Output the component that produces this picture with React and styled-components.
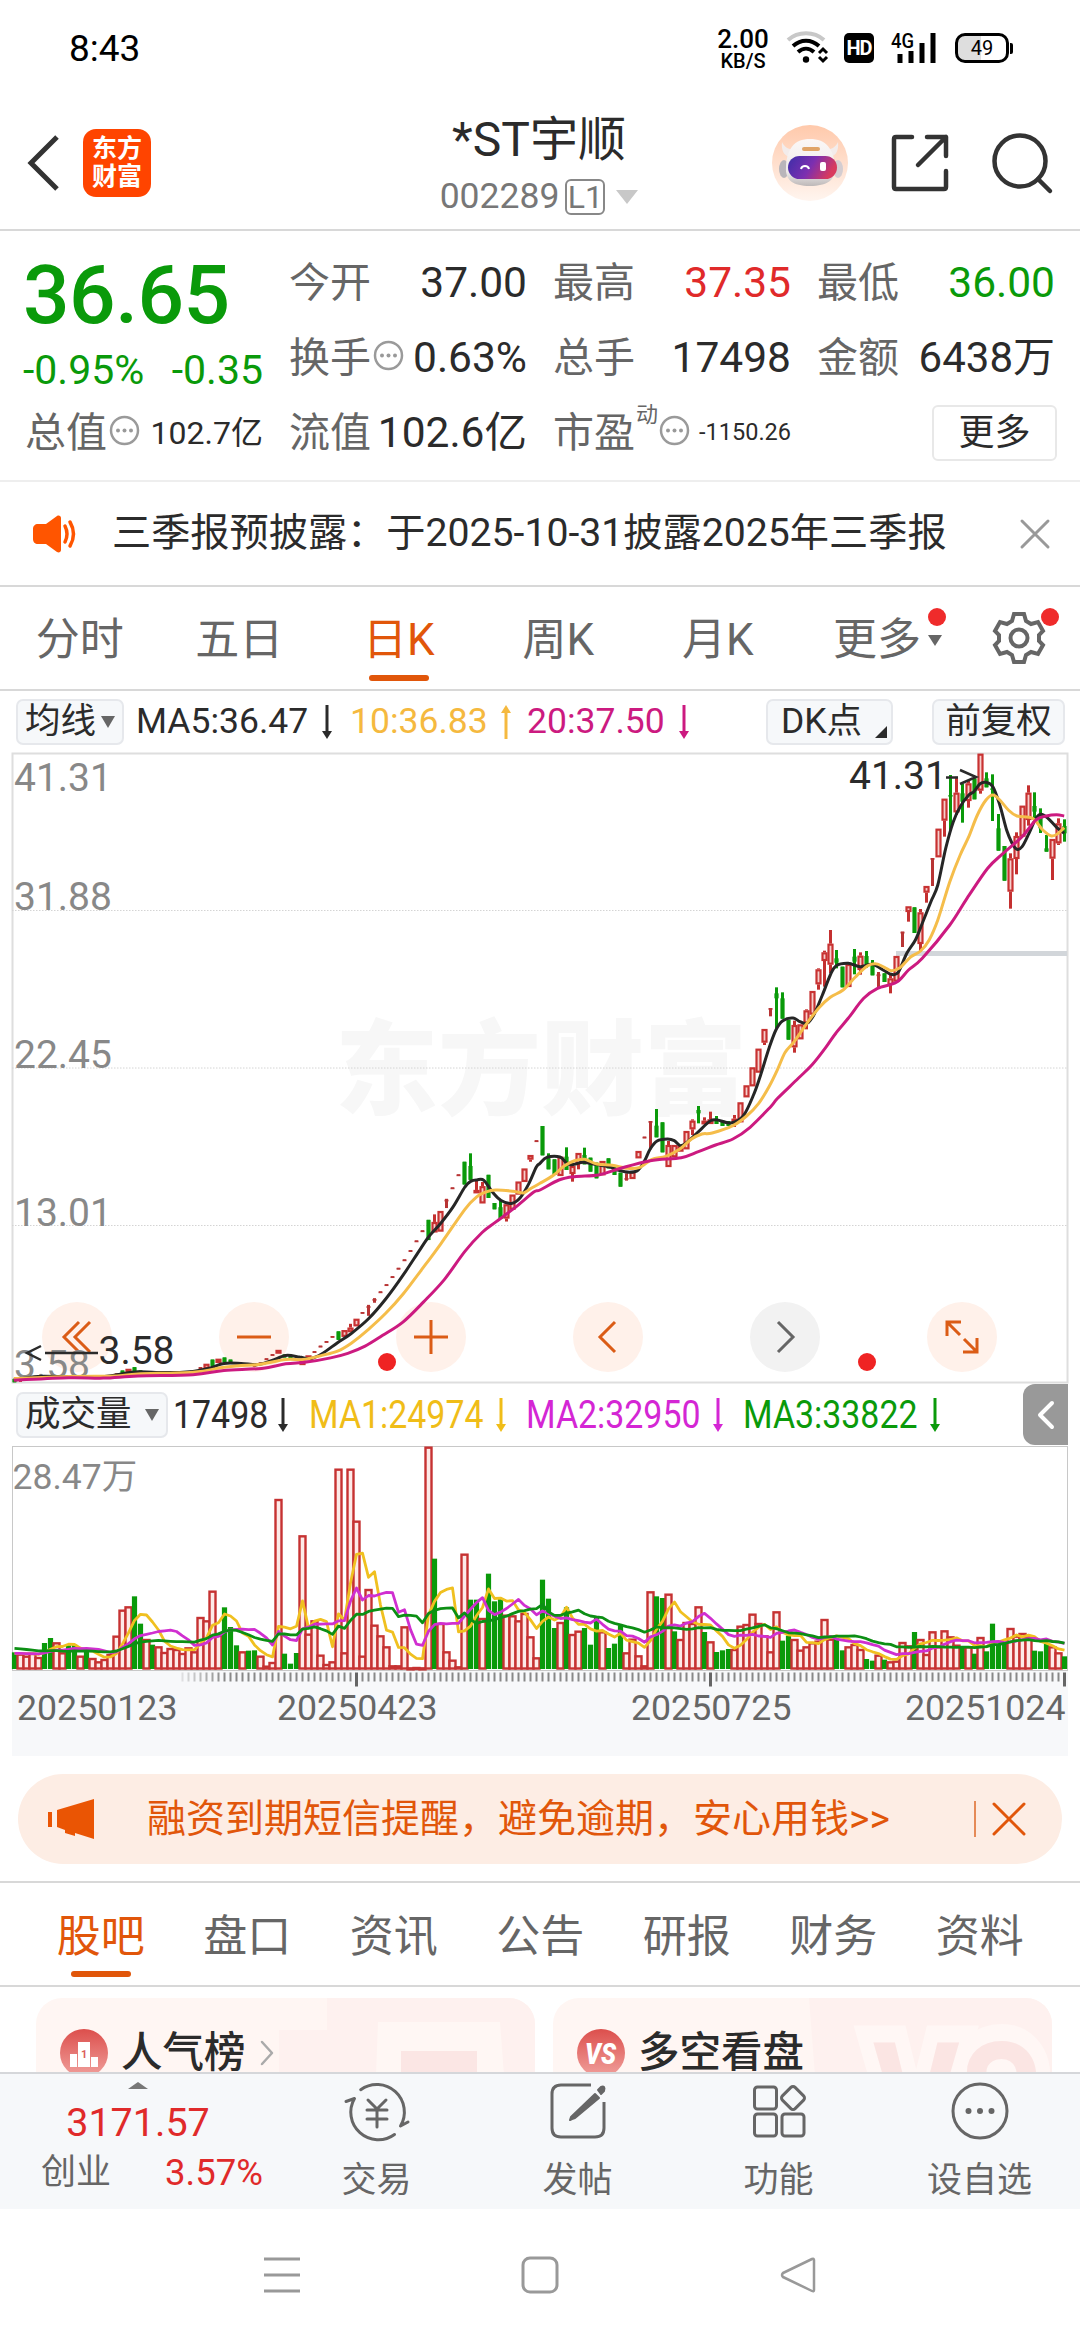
import React from "react";
import styled, { createGlobalStyle } from "styled-components";

const ORANGE = "#e1560a";
const RED = "#e02a2a";
const GREEN = "#0a9a0a";
const DARK = "#2b2b2b";
const GREY = "#666";

const GlobalStyle = createGlobalStyle`
  * {
    box-sizing: border-box;
  }
  body {
    margin: 0;
    background: #fff;
    font-family: Roboto, "Noto Sans CJK SC", sans-serif;
    color: ${DARK};
  }
  svg {
    display: block;
    flex: none;
    overflow: visible;
  }
`;

const Screen = styled.div`
  width: 1080px;
  height: 2340px;
  overflow: hidden;
  display: flex;
  flex-direction: column;
  line-height: 1;
  white-space: nowrap;
`;

/* ---------- status bar ---------- */

const StatusBar = styled.div`
  height: 96px;
  flex: none;
  padding: 0 67px 0 69px;
  display: flex;
  align-items: center;
  justify-content: space-between;
  color: #000;
  font-size: 37px;
`;

const StatusIcons = styled.div`
  display: flex;
  align-items: center;
`;

const NetSpeed = styled.div`
  width: 52px;
  margin-right: 18px;
  display: flex;
  flex-direction: column;
  align-items: center;
  font-size: 26px;
  font-weight: 500;
  small {
    font-size: 20px;
    line-height: 18px;
  }
`;

const HdBadge = styled.div`
  width: 30px;
  height: 30px;
  margin: 0 17px;
  border-radius: 5px;
  background: #000;
  color: #fff;
  font-size: 20px;
  font-weight: 700;
  display: flex;
  align-items: center;
  justify-content: center;
  letter-spacing: -1px;
`;

const Battery = styled.div`
  width: 54px;
  height: 30px;
  margin-left: 18px;
  border: 3px solid #000;
  border-radius: 10px;
  background: linear-gradient(90deg, #dedede 48%, #fff 48%);
  font-size: 20px;
  display: flex;
  align-items: center;
  justify-content: center;
`;

const BatteryTip = styled.div`
  width: 3px;
  height: 11px;
  margin-left: 1px;
  border-radius: 0 2px 2px 0;
  background: #000;
`;

/* ---------- header ---------- */

const Header = styled.header`
  height: 135px;
  flex: none;
  padding: 0 28px 0 26px;
  border-bottom: 2px solid #d8d8d8;
  display: grid;
  grid-template-columns: 1fr 240px 1fr;
  align-items: center;
`;

const HeaderSide = styled.div`
  display: flex;
  align-items: center;
  gap: ${(p) => p.$gap}px;
  justify-content: ${(p) => (p.$end ? "flex-end" : "flex-start")};
`;

const Logo = styled.div`
  width: 68px;
  height: 68px;
  border-radius: 13px;
  background: #ff4400;
  color: #fff;
  font-size: 25px;
  line-height: 28px;
  font-weight: 700;
  display: flex;
  flex-direction: column;
  align-items: center;
  justify-content: center;
`;

const TitleBlock = styled.div`
  padding-top: 13px;
  display: flex;
  flex-direction: column;
  align-items: center;
`;

const Title = styled.div`
  font-size: 48px;
  line-height: 56px;
`;

const Code = styled.div`
  display: flex;
  align-items: center;
  height: 58px;
  font-size: 35.5px;
  color: #777;
`;

const Level = styled.span`
  width: 40px;
  height: 36px;
  margin: 0 11px 0 6px;
  border: 2px solid #888;
  border-radius: 6px;
  font-size: 32px;
  display: flex;
  align-items: center;
  justify-content: center;
`;

const Caret = styled.span`
  width: 0;
  height: 0;
  border: ${(p) => p.$w / 2}px solid transparent;
  border-bottom-width: 0;
  border-top: ${(p) => p.$h}px solid ${(p) => p.$color};
`;

/* ---------- quote ---------- */

const Quote = styled.section`
  height: 251px;
  flex: none;
  padding: 14px 0 0 25px;
  border-bottom: 2px solid #eee;
  display: grid;
  grid-template-columns: repeat(4, 238px);
  grid-template-rows: repeat(3, 75px);
  column-gap: 26px;
`;

const Price = styled.div`
  grid-row: span 2;
  color: ${GREEN};
  display: flex;
  flex-direction: column;
  strong {
    margin-left: -2px;
    font-size: 82px;
    line-height: 100px;
    font-weight: 500;
    letter-spacing: -0.5px;
  }
  div {
    height: 50px;
    margin-left: -2px;
    display: flex;
    align-items: center;
    justify-content: space-between;
    font-size: 41px;
  }
`;

const Cell = styled.div`
  padding-top: 1px;
  display: flex;
  align-items: center;
  justify-content: space-between;
  font-size: 42px;
`;

const CellLabel = styled.span`
  display: flex;
  align-items: center;
  color: ${GREY};
  font-size: 41px;
  sup {
    align-self: flex-start;
    height: 22px;
    margin: -9px -1px 0 1px;
    line-height: 22px;
    vertical-align: baseline;
    font-size: 22px;
  }
  svg {
    margin: -5px 0 0 2px;
  }
`;

const CellValue = styled.span`
  font-size: ${(p) => p.$size || 42.5}px;
  color: ${(p) => p.$color || DARK};
`;

const MoreButton = styled.div`
  width: 125px;
  height: 56px;
  margin-right: -2px;
  align-self: center;
  justify-self: end;
  border: 2px solid #e8e8e8;
  border-radius: 6px;
  font-size: 36px;
  display: flex;
  align-items: center;
  justify-content: center;
`;

/* ---------- notice ---------- */

const Notice = styled.div`
  height: 105px;
  flex: none;
  padding: 0 30px 0 33px;
  border-bottom: 2px solid #d8d8d8;
  display: flex;
  align-items: center;
  font-size: 39.2px;
  span {
    flex: 1;
    margin-left: 33px;
  }
`;

/* ---------- tabs ---------- */

const TabBar = styled.div`
  height: 104px;
  flex: none;
  padding-left: ${(p) => p.$left}px;
  border-bottom: 2px solid #d8d8d8;
  display: flex;
  font-size: 44px;
  color: ${GREY};
`;

const Tab = styled.div`
  width: ${(p) => p.$width}px;
  padding-top: ${(p) => p.$drop || 0}px;
  position: relative;
  display: flex;
  align-items: center;
  justify-content: center;
  color: ${(p) => (p.$active ? ORANGE : GREY)};
  &::after {
    content: "";
    display: ${(p) => (p.$active ? "block" : "none")};
    position: absolute;
    bottom: 8px;
    width: 60px;
    height: 6px;
    border-radius: 3px;
    background: ${ORANGE};
  }
`;

const Badge = styled.i`
  position: absolute;
  top: 21px;
  right: ${(p) => p.$right}px;
  width: 18px;
  height: 18px;
  border-radius: 50%;
  background: #ef2b2b;
`;

/* ---------- chart legends ---------- */

const Legend = styled.div`
  height: ${(p) => p.$height}px;
  flex: none;
  padding-left: 16px;
  display: flex;
  align-items: center;
  font-size: 35.5px;
`;

const Chip = styled.div`
  width: ${(p) => p.$width}px;
  height: 46px;
  margin-left: ${(p) => p.$left || 0}px;
  padding: 0 7px;
  border: 2px solid #e6e8ec;
  border-radius: 7px;
  background: #f6f8fa;
  display: flex;
  align-items: center;
  justify-content: ${(p) => (p.$spread ? "space-between" : "center")};
`;

const DkChip = styled(Chip)`
  padding: 0 4px 0 13px;
`;

const Corner = styled.i`
  align-self: flex-end;
  margin-bottom: 5px;
  border-left: 12px solid transparent;
  border-bottom: 12px solid ${DARK};
`;

const Stat = styled.span`
  width: ${(p) => p.$width}px;
  margin-left: ${(p) => p.$left}px;
  color: ${(p) => p.$color};
  display: flex;
  align-items: center;
  justify-content: space-between;
`;

const Narrow = styled.span`
  width: 0;
  font-size: 38px;
  transform: scaleX(0.892);
  transform-origin: left;
`;

const SideHandle = styled.div`
  width: 45px;
  height: 61px;
  margin: 0 12px 0 auto;
  border-radius: 12px 0 0 12px;
  background: #999;
  display: flex;
  align-items: center;
  justify-content: center;
`;

/* ---------- charts ---------- */

const ChartBox = styled.div`
  position: relative;
  height: ${(p) => p.$height}px;
  flex: none;
  & > svg {
    position: relative;
  }
`;

// sits under the curves and price labels
const Tools = styled.div`
  position: absolute;
  left: 41.5px;
  bottom: 11px;
  display: flex;
  gap: 107px;
`;

const Tool = styled.div`
  width: 70px;
  height: 70px;
  border-radius: 50%;
  background: ${(p) => (p.$muted ? "#f2f2f2" : "#fff1ea")};
  color: ${(p) => (p.$muted ? GREY : "#db5c16")};
  display: flex;
  align-items: center;
  justify-content: center;
`;

/* ---------- banner ---------- */

const BannerWrap = styled.div`
  height: 127px;
  flex: none;
  padding: 18px 18px 0;
  border-bottom: 2px solid #d8d8d8;
`;

const Banner = styled.div`
  height: 90px;
  padding: 0 36px 0 30px;
  border-radius: 45px;
  background: #fdede4;
  color: ${ORANGE};
  font-size: 39px;
  display: flex;
  align-items: center;
  span {
    flex: 1;
    margin-left: 53px;
  }
  i {
    width: 2px;
    height: 36px;
    margin-right: 16px;
    background: #e58a57;
  }
`;

/* ---------- cards ---------- */

const Cards = styled.div`
  height: 85px;
  flex: none;
  padding: 11px 28px 0 36px;
  overflow: hidden;
  display: flex;
  gap: 18px;
`;

const Card = styled.div`
  position: relative;
  flex: 1;
  height: 130px;
  padding: 31px 0 0 24px;
  border-radius: 26px;
  overflow: hidden;
  background: #fff6f3;
  display: flex;
  align-items: flex-start;
  font-size: 41.5px;
  line-height: 48px;
  font-weight: 500;
  & > span {
    margin: 0 12px 0 13px;
    position: relative;
  }
  & > svg {
    position: relative;
  }
`;

const CardArt = styled.div`
  position: absolute;
  inset: 0;
`;

/* ---------- bottom ---------- */

const BottomBar = styled.div`
  height: 137px;
  flex: none;
  border-top: 2px solid #d5d7da;
  background: #f6f8fa;
  display: grid;
  grid-template-columns: 276px repeat(4, 201px);
`;

const IndexBox = styled.div`
  padding: 8px 13px 0 41px;
  display: flex;
  flex-direction: column;
  color: ${RED};
  strong {
    margin: 15px 28px 0 0;
    text-align: center;
    font-weight: 400;
    font-size: 39.5px;
    line-height: 38px;
  }
  div {
    display: flex;
    justify-content: space-between;
    margin-top: 11px;
    line-height: 40px;
    font-size: 36.5px;
  }
  em {
    font-style: normal;
    font-size: 35px;
    color: ${GREY};
  }
`;

const CaretUp = styled.i`
  align-self: center;
  margin-right: 28px;
  border: 10px solid transparent;
  border-top-width: 0;
  border-bottom: 7px solid #777;
`;

const Action = styled.div`
  padding-top: 7px;
  display: flex;
  flex-direction: column;
  align-items: center;
  gap: 22px;
  font-size: 35px;
  color: ${GREY};
`;

const NavBar = styled.div`
  flex: 1;
  padding: 0 263px;
  display: flex;
  align-items: center;
  justify-content: space-between;
`;

/* ---------- chart data ---------- */

const STEP = 6;
const xAt = (i) => 14.5 + i * STEP;

// three panes of the price chart, each with its own grid
const PANES = {
  a: { x0: 0, y0: -13, sx: 2.9037, sy: 2.3758 },
  b: { x0: 540, y0: 307, sx: 2.9037, sy: 3 },
  c: { x0: 540, y0: -13, sx: 2.9037, sy: 3 },
};

// index, direction, body top, body bottom, high, low
const CANDLES = {
  a: [
    [0, "g", 1518, 1526], [1, "r", 1518, 1525], [4, "r", 1513, 1519], [5, "g", 1510, 1518],
    [9, "g", 1509, 1516], [10, "g", 1511, 1517], [13, "r", 1513, 1518],
    [17, "r", 1505, 1510], [18, "g", 1498, 1508], [19, "r", 1494, 1504], [20, "g", 1490, 1500],
    [21, "g", 1498, 1503], [31, "r", 1490, 1497], [32, "r", 1482, 1494], [33, "g", 1472, 1487],
    [34, "r", 1470, 1480], [35, "g", 1467, 1478], [36, "g", 1472, 1482], [40, "r", 1484, 1489],
    [41, "r", 1479, 1482], [42, "r", 1469, 1472], [43, "r", 1459, 1462], [44, "r", 1449, 1458],
    [45, "g", 1460, 1467], [46, "g", 1464, 1469], [48, "r", 1474, 1485], [49, "r", 1462, 1472],
    [50, "r", 1452, 1455], [51, "r", 1439, 1442], [52, "r", 1428, 1431], [53, "r", 1416, 1419],
    [54, "g", 1405, 1425], [55, "r", 1402, 1418], [56, "r", 1396, 1407, 1387], [57, "r", 1375, 1393],
    [58, "r", 1359, 1362], [59, "r", 1345, 1351, 1342, 1368], [60, "r", 1328, 1331, 1326, 1337], [61, "r", 1310, 1313],
    [62, "r", 1293, 1296], [63, "r", 1274, 1277], [64, "r", 1254, 1257], [65, "r", 1234, 1237],
    [66, "r", 1212, 1215], [67, "r", 1189, 1192], [68, "r", 1165, 1168], [69, "g", 1140, 1188],
    [70, "r", 1145, 1170, 1127], [71, "r", 1119, 1168], [72, "r", 1092, 1096, 1090, 1112], [73, "r", 1063, 1066],
    [74, "r", 1032, 1035], [75, "g", 1002, 1056], [76, "g", 1012, 1045, 982], [77, "r", 1069, 1077, 1045],
    [78, "r", 1060, 1101, 1050], [79, "g", 1033, 1088], [80, "g", 1100, 1115], [81, "g", 1110, 1138, 1093],
    [82, "r", 1103, 1137, 1103, 1144], [83, "r", 1080, 1116], [84, "r", 1049, 1080], [85, "r", 1018, 1050],
    [86, "r", 986, 997, 986, 1002], [87, "r", 951, 954],
  ],
  b: [
    [88, "g", 198, 286], [89, "g", 295, 328, 280], [90, "g", 298, 345], [91, "r", 290, 348],
    [92, "g", 290, 330, 262], [93, "r", 318, 342, 318, 365], [94, "r", 279, 312, 279, 328], [95, "g", 285, 313, 263],
    [96, "g", 293, 335], [97, "g", 308, 355], [98, "r", 303, 346], [99, "g", 295, 325],
    [100, "g", 318, 345], [101, "g", 338, 380], [102, "r", 354, 362, 340], [103, "r", 335, 357],
    [104, "r", 273, 295], [105, "r", 230, 233], [106, "r", 183, 185, 183, 268], [107, "g", 197, 232, 147],
    [108, "g", 187, 277], [109, "r", 255, 321, 243], [110, "r", 255, 292], [111, "r", 258, 275],
    [112, "r", 213, 268], [113, "r", 182, 208, 178, 225], [114, "g", 150, 160, 138, 190], [115, "r", 182, 193, 172],
    [116, "r", 178, 192, 155], [117, "g", 178, 192, 168], [118, "g", 182, 198], [119, "g", 184, 198],
    [120, "r", 176, 188, 165, 201], [121, "r", 127, 187], [122, "r", 76, 112], [123, "r", 22, 79],
    [124, "r", -34, 38],
  ],
  c: [
    [125, "r", 867, 908, 867, 915], [126, "r", 804, 811, 804, 829], [127, "g", 760, 775, 742, 866], [128, "g", 775, 836, 757],
    [129, "g", 840, 899], [130, "r", 855, 922, 842, 938], [131, "r", 853, 898], [132, "r", 811, 850, 808, 868],
    [133, "r", 753, 824], [134, "r", 688, 733, 685, 749], [135, "r", 637, 663, 632, 740], [136, "r", 611, 674, 570, 700],
    [137, "g", 655, 668, 630, 685], [138, "g", 680, 742], [139, "r", 672, 741], [140, "g", 650, 665, 627, 703],
    [141, "r", 647, 690, 637, 704], [142, "g", 648, 672, 633, 683], [143, "g", 675, 706, 660], [144, "r", 703, 711, 696, 742],
    [145, "g", 700, 726], [146, "r", 715, 735, 703, 760], [147, "r", 648, 725], [148, "r", 575, 577, 575, 621],
    [149, "r", 499, 516, 499, 545], [150, "g", 502, 579], [151, "r", 517, 612, 507, 634], [152, "r", 438, 458, 438, 488],
    [153, "r", 354, 356, 354, 438], [154, "r", 266, 352], [155, "r", 176, 242, 176, 290], [156, "g", 165, 170, 105, 270],
    [157, "r", 158, 217, 110, 225], [158, "g", 160, 185, 132, 248], [159, "r", 130, 183, 120, 203], [160, "g", 115, 178],
    [161, "r", 41, 152, 41, 161], [162, "g", 115, 142, 97], [163, "g", 145, 150, 103, 243], [164, "g", 265, 332, 222],
    [165, "g", 318, 422], [166, "r", 355, 455, 340, 506], [167, "r", 288, 357, 277, 403], [168, "r", 197, 290],
    [169, "r", 158, 240, 136, 257], [170, "g", 198, 215, 157, 235], [171, "g", 225, 265, 205, 279], [172, "g", 325, 335, 285],
    [173, "r", 297, 356, 297, 420], [174, "r", 250, 310, 235, 315], [175, "g", 258, 280, 238, 305],
  ],
};

const AVERAGES = [
  {
    color: "#262626",
    a: [40, 1520, 110, 1512, 200, 1513, 280, 1514, 340, 1508, 400, 1501, 480, 1503, 560, 1500, 610, 1492, 650, 1481, 700, 1481, 750, 1484, 790, 1474, 830, 1462, 870, 1466, 900, 1470, 935, 1458, 980, 1432, 1020, 1410, 1070, 1375, 1120, 1328, 1170, 1272, 1220, 1210, 1245, 1180, 1280, 1148, 1315, 1110, 1350, 1062, 1368, 1048, 1385, 1045, 1405, 1046, 1430, 1074, 1455, 1094, 1485, 1101, 1510, 1088, 1535, 1055, 1557, 1015],
    b: [0, 310, 20, 292, 58, 291, 80, 312, 100, 313, 125, 307, 160, 313, 200, 320, 225, 330, 260, 337, 285, 330, 305, 300, 320, 267, 340, 243, 370, 237, 390, 242, 408, 257, 430, 244, 470, 205, 495, 182, 515, 180, 555, 189, 590, 168, 620, 105, 640, 47],
    c: [665, 925, 685, 870, 705, 842, 735, 834, 755, 845, 775, 850, 795, 825, 820, 765, 843, 705, 860, 677, 895, 670, 930, 680, 965, 673, 1000, 692, 1020, 703, 1040, 697, 1065, 640, 1090, 600, 1110, 550, 1135, 485, 1155, 435, 1178, 325, 1200, 245, 1220, 200, 1245, 165, 1260, 155, 1277, 132, 1295, 127, 1315, 140, 1335, 195, 1355, 270, 1370, 308, 1385, 328, 1400, 320, 1420, 280, 1440, 235, 1455, 223, 1475, 235, 1500, 262, 1522, 280],
  },
  {
    color: "#f5bd4a",
    a: [40, 1517, 200, 1512, 340, 1511, 400, 1506, 560, 1502, 650, 1490, 700, 1486, 750, 1484, 830, 1472, 880, 1472, 935, 1462, 980, 1452, 1020, 1433, 1070, 1400, 1120, 1362, 1170, 1317, 1220, 1263, 1280, 1197, 1350, 1115, 1385, 1085, 1410, 1074, 1440, 1069, 1490, 1072, 1520, 1076, 1540, 1066],
    b: [0, 370, 40, 345, 70, 318, 100, 302, 130, 298, 165, 312, 210, 316, 255, 325, 290, 322, 325, 298, 365, 289, 405, 268, 440, 237, 470, 222, 500, 219, 560, 197, 600, 168, 635, 130, 665, 80, 690, 28],
    c: [712, 937, 738, 905, 775, 850, 810, 803, 843, 772, 880, 750, 915, 712, 950, 678, 975, 671, 1000, 682, 1020, 692, 1045, 683, 1075, 652, 1105, 633, 1130, 600, 1155, 540, 1190, 425, 1220, 345, 1245, 290, 1270, 225, 1295, 180, 1315, 165, 1335, 180, 1360, 210, 1385, 228, 1430, 235, 1460, 270, 1485, 288, 1505, 280, 1522, 263],
  },
  {
    color: "#cc1a80",
    a: [40, 1521, 200, 1515, 300, 1516, 400, 1511, 560, 1508, 650, 1498, 760, 1493, 830, 1482, 890, 1478, 960, 1468, 1010, 1457, 1060, 1440, 1110, 1415, 1170, 1383, 1230, 1335, 1290, 1282, 1350, 1215, 1400, 1170, 1440, 1145, 1500, 1108, 1550, 1074],
    b: [0, 390, 55, 360, 100, 350, 170, 345, 230, 326, 320, 302, 410, 293, 460, 275, 510, 255, 560, 237, 610, 202, 670, 140, 690, 115, 750, 55, 790, 14],
    c: [830, 922, 860, 878, 895, 835, 940, 775, 980, 745, 1035, 727, 1070, 690, 1110, 655, 1190, 555, 1240, 475, 1300, 385, 1345, 340, 1400, 290, 1440, 240, 1470, 228, 1500, 224, 1522, 228],
  },
];

const toY = (pane, v) => v / pane.sy + pane.y0;

const toPoints = (line) =>
  ["a", "b", "c"].flatMap((key) => {
    const pane = PANES[key];
    const points = [];
    for (let i = 0; i < line[key].length; i += 2) {
      points.push([line[key][i] / pane.sx + pane.x0, toY(pane, line[key][i + 1])]);
    }
    return points;
  });

// Catmull-Rom through the points
const smooth = (pts) =>
  pts.reduce((d, p, i) => {
    if (i === 0) return `M${p[0].toFixed(1)} ${p[1].toFixed(1)}`;
    const p0 = pts[i - 2] || pts[i - 1];
    const p1 = pts[i - 1];
    const p3 = pts[i + 1] || p;
    const c = [
      p1[0] + (p[0] - p0[0]) / 6,
      p1[1] + (p[1] - p0[1]) / 6,
      p[0] - (p3[0] - p1[0]) / 6,
      p[1] - (p3[1] - p1[1]) / 6,
      p[0],
      p[1],
    ];
    return `${d}C${c.map((n) => n.toFixed(1)).join(" ")}`;
  }, "");

const FLOOR = 868;
const VOLUME = `g818 r822 r828 r820 r832 g790 g775 r788 r818 g797 g795 r828 g817 r835 r845 r838 r823 r768 r690 r680
g650 g732 r778 g795 r800 r817 r805 r808 r820 r803 r815 r712 r722 r633 r765 g683 g742 g797 r815 g813
g812 r828 r858 r847 r358 g822 g852 g820 r467 r762 r722 r825 r853 r845 r267 r818 r267 r423 r828 r628
r735 r767 r800 r857 r857 r740 r863 r862 r863 r201 g537 r730 r815 r840 r860 r522 g660 g660 r715 g582
g665 g655 r705 r707 r722 r700 r770 r833 g600 g657 g745 r727 g683 r763 r753 g745 g795 g715 r755 g805
g792 g737 r818 r777 r827 r857 r635 g650 g655 r642 g755 r778 r727 r730 r680 g757 r785 g817 g812 g808
r808 r738 r733 r702 r730 r767 r815 r695 g783 g768 r778 r810 r800 r788 r783 r718 r777 g778 g812 r800
r793 r808 g838 g843 r825 g840 r845 r843 r787 r797 g757 r778 r823 r755 r800 r752 r770 r795 g800 r800
g822 r772 g815 g732 g795 g790 r745 r768 r760 r770 g813 g815 g793 r800 r818 g830`
  .split(/\s+/)
  .map((s) => ({ up: s[0] === "r", h: (FLOOR - Number(s.slice(1))) / 3 }));

const HISTORY = [...Array(10).fill(27), ...Array(10).fill(15.5)];

const volumeAverage = (n) => {
  const all = [...HISTORY, ...VOLUME.map((v) => v.h)];
  return VOLUME.map((_, i) => {
    const end = i + HISTORY.length + 1;
    const sum = all.slice(end - n, end).reduce((a, b) => a + b, 0);
    return `${xAt(i)},${(223 - sum / n).toFixed(1)}`;
  }).join(" ");
};

/* ---------- icons ---------- */

const Stroke = ({ w, h, d, color = "currentColor", sw = 4, cap = "round", join = "round", children }) => (
  <svg width={w} height={h} viewBox={`0 0 ${w} ${h}`} fill="none" stroke={color} strokeWidth={sw} strokeLinecap={cap} strokeLinejoin={join}>
    {d && <path d={d} />}
    {children}
  </svg>
);

const Arrow = ({ up }) => (
  <svg width="12" height="34" viewBox="0 0 12 34">
    <g transform={up ? "rotate(180 6 17)" : undefined}>
      <path d="M6 0V28" stroke="currentColor" strokeWidth="3" />
      <path d="M1 26h10l-5 8z" fill="currentColor" />
    </g>
  </svg>
);

const Dots = () => (
  <svg width="31" height="31" viewBox="0 0 31 31">
    <circle cx="15.5" cy="15.5" r="13.5" fill="none" stroke="#9a9a9a" strokeWidth="2.500" />
    <g fill="#999">
      <circle cx="9" cy="15.5" r="2" />
      <circle cx="15.5" cy="15.5" r="2" />
      <circle cx="22" cy="15.5" r="2" />
    </g>
  </svg>
);

const Robot = () => (
  <svg width="76" height="76" viewBox="0 0 76 76">
    <defs>
      <linearGradient id="halo" x1="0" y1="0" x2="0" y2="1">
        <stop offset="0" stopColor="#ffc9ab" />
        <stop offset="1" stopColor="#fff5ef" />
      </linearGradient>
      <linearGradient id="visor" x1="0" y1="0" x2="1" y2="0.3">
        <stop offset="0" stopColor="#3d2ea8" />
        <stop offset="0.55" stopColor="#7c2fb0" />
        <stop offset="1" stopColor="#d83a5e" />
      </linearGradient>
      <linearGradient id="shell" x1="0" y1="0" x2="0" y2="1">
        <stop offset="0" stopColor="#fbf7f6" />
        <stop offset="0.7" stopColor="#efebeb" />
        <stop offset="1" stopColor="#bdb8b8" />
      </linearGradient>
    </defs>
    <circle cx="38" cy="38" r="38" fill="url(#halo)" />
    <path d="M10 17c-1 8 2 14 8 15l6-7c-7 0-12-3-14-8zM66 17c1 8-2 14-8 15l-6-7c7 0 12-3 14-8z" fill="#f3eceb" />
    <ellipse cx="12" cy="44" rx="5" ry="9" fill="#b9b5ba" />
    <ellipse cx="66" cy="44" rx="5" ry="9" fill="#d4cdd1" />
    <path d="M14 42C15 24 22 14 38 14s24 10 25 28c1 13-8 19-25 19S13 55 14 42z" fill="url(#shell)" />
    <rect x="30" y="22" width="18" height="4" rx="2" fill="#e0a468" />
    <rect x="16" y="31" width="49" height="23" rx="11.500" fill="url(#visor)" />
    <path d="M29 44c1-4 7-4 8 0" fill="none" stroke="#fff" strokeWidth="2" />
    <rect x="48" y="37" width="6" height="9" rx="2" fill="#fff" />
  </svg>
);

const Wifi = () => (
  <svg width="40" height="32" viewBox="0 0 40 32" fill="none" strokeWidth="4">
    <path d="M1 8C11-1 27-1 37 8" stroke="#c8c8c8" />
    <path d="M6 14C14 7 24 7 32 14M11 20C16 15.500 22 15.500 27 20" stroke="#000" />
    <circle cx="19" cy="27.500" r="3.200" fill="#000" />
    <path d="M32 21l4-4 4 4M32 25l4 4 4-4" stroke="#000" strokeWidth="3" />
  </svg>
);

const Signal = () => (
  <svg width="46" height="32" viewBox="0 0 46 32">
    <text x="0" y="16" fontSize="20" fontWeight="500" textLength="23" lengthAdjust="spacingAndGlyphs">4G</text>
    <path d="M9 22V31M20 19V31M31 11V31M42 1V31" stroke="#000" strokeWidth="5" />
  </svg>
);

const Gear = () => (
  <Stroke w={52} h={54} sw={4} join="miter" cap="butt">
    <path d="M21 3h10l2 7 5 3 7-2 5 9-4 4v6l4 4-5 9-7-2-5 3-2 7H21l-2-7-5-3-7 2-5-9 4-4v-6l-4-4 5-9 7 2 5-3z" />
    <circle cx="26" cy="27" r="8.500" />
  </Stroke>
);

const Speaker = () => (
  <svg width="46" height="38" viewBox="0 0 46 38">
    <path d="M5 9h8L24 1c2-1 4 0 4 2v32c0 2-2 3-4 2l-11-8H5c-3 0-5-2-5-5V14c0-3 2-5 5-5z" fill="#ff5500" />
    <path d="M32 11q4 8 0 16M37 7q7 12 0 24" fill="none" stroke="#ff5500" strokeWidth="3.500" strokeLinecap="round" />
  </svg>
);

const Horn = () => (
  <svg width="46" height="40" viewBox="0 0 46 40">
    <path d="M0 13h4v15H0zM9 11L46 0v40l-19-6v3l-10-3v-3l-8-3z" fill="#ea5504" />
  </svg>
);

const TradeIcon = () => (
  <Stroke w={66} h={60} sw={3}>
    <path d="M16.700 8.700A27.500 27.500 0 0 1 56.500 45l7.500-4M50.500 53.500A27.500 27.500 0 0 1 10.500 17.500L2 20.500" />
    <path d="M24 19l9 9 9-9M33 28v18M23 29h20M23 38h20" />
  </Stroke>
);

const PostIcon = () => (
  <Stroke w={60} h={60} sw={3} cap="butt">
    <path d="M43 4H13Q4 4 4 13v34q0 9 9 9h34q9 0 9-9V21" />
    <path d="M24 38l-2 1 1-3L47 13l4 4-24 20zM50 9l3-3q2-1 3 0t0 4l-3 3z" fill="currentColor" strokeWidth="2" />
  </Stroke>
);

const GridIcon = () => (
  <Stroke w={60} h={60} sw={3}>
    <rect x="5.500" y="6" width="22" height="22" rx="3" />
    <rect x="5.500" y="33" width="22" height="22" rx="3" />
    <rect x="33" y="33" width="22" height="22" rx="3" />
    <rect x="35" y="8" width="18" height="18" rx="3" transform="rotate(45 44 17)" />
  </Stroke>
);

const MoreIcon = () => (
  <Stroke w={60} h={60} sw={3}>
    <circle cx="30" cy="30" r="27" />
    <g fill="currentColor" stroke="none">
      <circle cx="18.500" cy="30" r="3" />
      <circle cx="30" cy="30" r="3" />
      <circle cx="41.500" cy="30" r="3" />
    </g>
  </Stroke>
);

const CardIcon = ({ id, children }) => (
  <svg width="48" height="48" viewBox="0 0 48 48">
    <defs>
      <linearGradient id={id} x1="0" y1="0" x2="0" y2="1">
        <stop offset="0" stopColor="#dc4f4c" />
        <stop offset="1" stopColor="#f0a09c" />
      </linearGradient>
    </defs>
    <circle cx="24" cy="24" r="24" fill={`url(#${id})`} />
    {children}
  </svg>
);

/* ---------- charts ---------- */

const Candle = ({ pane, data }) => {
  const [i, dir, top, bottom, high = top, low = bottom] = data;
  const x = xAt(i);
  const [t, b, h, l] = [top, bottom, high, low].map((v) => toY(pane, v));
  if (dir === "g") {
    return (
      <g fill={GREEN}>
        <rect x={x - 1.5} y={h} width="3" height={l - h} />
        <rect x={x - 2.1} y={t} width="4.200" height={b - t} />
      </g>
    );
  }
  if (b - t < 3.2) {
    return (
      <g fill="#b83434">
        <rect x={x - 1.5} y={h} width="3" height={Math.max(l - h, 1.5)} />
        <rect x={x - 2} y={t} width="4" height="1.800" />
      </g>
    );
  }
  return (
    <g fill="#c43030">
      <rect x={x - 1.5} y={h} width="3" height={t - h} />
      <rect x={x - 1.5} y={b} width="3" height={l - b} />
      <rect x={x - 2} y={t + 1} width="4" height={Math.max(b - t - 2, 0.5)} fill="#f6cfcc" stroke="#c83232" strokeWidth="2.200" />
    </g>
  );
};

const SCALE = [
  ["41.31", 37.5],
  ["31.88", 157],
  ["22.45", 314.5],
  ["13.01", 473],
  ["3.58", 624.5],
];

function PriceChart() {
  return (
    <svg width="1080" height="630" viewBox="0 0 1080 630">
      <rect x="12.500" y="0.500" width="1055" height="629" fill="none" stroke="#dedede" strokeWidth="2" />
      <text x="335" y="354" fontSize="103" fontWeight="900" fill="#f7f7f7">东方财富</text>
      {[157.5, 315, 472.5].map((y) => (
        <path key={y} d={`M12 ${y}H1067`} stroke="#d4d4d4" strokeDasharray="1.500 1.500" />
      ))}
      <rect x="896" y="198" width="171" height="5" fill="#d2d6da" />
      <g fontSize="39" fill="#888">
        {SCALE.map(([label, y]) => (
          <text key={label} x="14" y={y}>{label}</text>
        ))}
      </g>
      {Object.keys(CANDLES).map((key) =>
        CANDLES[key].map((data) => <Candle key={data[0]} pane={PANES[key]} data={data} />)
      )}
      {AVERAGES.map((line) => (
        <path key={line.color} d={smooth(toPoints(line))} fill="none" stroke={line.color} strokeWidth="3" />
      ))}
      <g fontSize="39" fill={DARK}>
        <text x="98.500" y="611">3.58</text>
        <text x="849" y="36">41.31</text>
      </g>
      <path d="M41 593L27 600l14 7M45 600H98M946 24.500H958M960 17l16 7-16 7" fill="none" stroke={DARK} strokeWidth="2.500" />
      <circle cx="387" cy="609" r="9" fill="#ef2323" />
      <circle cx="867" cy="609" r="9" fill="#ef2323" />
    </svg>
  );
}

const DATES = [
  ["20250123", 17],
  ["20250423", 277],
  ["20250725", 631],
  ["20251024", 905],
];

function VolumeChart() {
  return (
    <svg width="1080" height="310" viewBox="0 0 1080 310">
      <rect x="12" y="225" width="1056" height="85" fill="#f7f8fa" />
      <rect x="12.500" y="0.500" width="1055" height="224" fill="#fff" stroke="#c8c8c8" />
      <text x="12.500" y="43" fontSize="35.500" fill="#888">28.47万</text>
      {VOLUME.map(({ up, h }, i) =>
        up ? (
          <rect key={i} x={xAt(i) - 3} y={224 - h} width="6" height={Math.max(h - 1.5, 1)} fill="#fdeae8" stroke="#c63232" strokeWidth="2.400" />
        ) : (
          <rect key={i} x={xAt(i) - 2.6} y={223 - h} width="5.200" height={h} fill={GREEN} />
        )
      )}
      <g fill="none" strokeWidth="2.800" strokeLinejoin="round">
        <polyline points={volumeAverage(5)} stroke="#f0c020" />
        <polyline points={volumeAverage(10)} stroke="#d02fd0" />
        <polyline points={volumeAverage(20)} stroke="#0c8f14" />
      </g>
      {VOLUME.map((_, i) => {
        if (i < 28) return null;
        const major = i === 57 || i === 116 || i === 175;
        return (
          <rect
            key={i}
            x={xAt(i) - (major ? 1.5 : 1)}
            y="226.500"
            width={major ? 3 : 2}
            height={major ? 14 : 9}
            fill={major ? "#666" : "#888"}
            opacity={Math.min(1, (i - 26) / 9)}
          />
        );
      })}
      <g fontSize="35.700" fill={GREY}>
        {DATES.map(([date, x]) => (
          <text key={date} x={x} y="274">{date}</text>
        ))}
      </g>
    </svg>
  );
}

/* ---------- app ---------- */

const PERIODS = ["分时", "五日", "日K", "周K", "月K"];
const SECTIONS = ["股吧", "盘口", "资讯", "公告", "研报", "财务", "资料"];

const ACTIONS = [
  ["交易", TradeIcon],
  ["发帖", PostIcon],
  ["功能", GridIcon],
  ["设自选", MoreIcon],
];

function App() {
  return (
    <Screen>
      <GlobalStyle />
      <StatusBar>
        <span>8:43</span>
        <StatusIcons>
          <NetSpeed>
            2.00
            <small>KB/S</small>
          </NetSpeed>
          <Wifi />
          <HdBadge>HD</HdBadge>
          <Signal />
          <Battery>49</Battery>
          <BatteryTip />
        </StatusIcons>
      </StatusBar>

      <Header>
        <HeaderSide $gap={22}>
          <Stroke w={35} h={58} sw={5} cap="butt" join="miter" color="#333" d="M31 3L5 29l26 26" />
          <Logo>
            <span>东方</span>
            <span>财富</span>
          </Logo>
        </HeaderSide>
        <TitleBlock>
          <Title>*ST宇顺</Title>
          <Code>
            002289
            <Level>L1</Level>
            <Caret $w={22} $h={14} $color="#c8c8c8" />
          </Code>
        </TitleBlock>
        <HeaderSide $end $gap={43}>
          <Robot />
          <Stroke w={58} h={58} sw={4.5} color="#333" d="M21 3H5Q3 3 3 5V53Q3 55 5 55H53Q55 55 55 53V37M36 3H55V22M55 3L27 31" />
          <Stroke w={60} h={60} sw={4.5} color="#333">
            <circle cx="28" cy="28" r="25.500" />
            <path d="M46 46L58 58" />
          </Stroke>
        </HeaderSide>
      </Header>

      <Quote>
        <Price>
          <strong>36.65</strong>
          <div>
            <span>-0.95%</span>
            <span>-0.35</span>
          </div>
        </Price>
        <Cell>
          <CellLabel>今开</CellLabel>
          <CellValue>37.00</CellValue>
        </Cell>
        <Cell>
          <CellLabel>最高</CellLabel>
          <CellValue $color={RED}>37.35</CellValue>
        </Cell>
        <Cell>
          <CellLabel>最低</CellLabel>
          <CellValue $color={GREEN}>36.00</CellValue>
        </Cell>
        <Cell>
          <CellLabel>换手<Dots /></CellLabel>
          <CellValue>0.63%</CellValue>
        </Cell>
        <Cell>
          <CellLabel>总手</CellLabel>
          <CellValue>17498</CellValue>
        </Cell>
        <Cell>
          <CellLabel>金额</CellLabel>
          <CellValue $size={42}>6438万</CellValue>
        </Cell>
        <Cell>
          <CellLabel>总值<Dots /></CellLabel>
          <CellValue $size={32}>102.7亿</CellValue>
        </Cell>
        <Cell>
          <CellLabel>流值</CellLabel>
          <CellValue>102.6亿</CellValue>
        </Cell>
        <Cell>
          <CellLabel>市盈<sup>动</sup><Dots /></CellLabel>
          <CellValue $size={23.5}>-1150.26</CellValue>
        </Cell>
        <MoreButton>更多</MoreButton>
      </Quote>

      <Notice>
        <Speaker />
        <span>三季报预披露：于2025-10-31披露2025年三季报</span>
        <Stroke w={30} h={30} sw={3} color="#999" d="M2 2L28 28M28 2L2 28" />
      </Notice>

      <TabBar $left={0}>
        {PERIODS.map((name) => (
          <Tab key={name} $width={159.5} $drop={4} $active={name === "日K"}>{name}</Tab>
        ))}
        <Tab $width={180} $drop={4}>
          更多
          <Caret $w={14} $h={11} $color={GREY} style={{ marginLeft: 7 }} />
          <Badge $right={32} />
        </Tab>
        <Tab $width={82}>
          <Gear />
          <Badge $right={1} />
        </Tab>
      </TabBar>

      <Legend $height={62}>
        <Chip $width={108} $spread>
          均线
          <Caret $w={15} $h={12} $color={GREY} />
        </Chip>
        <Stat $left={12} $width={197} $color={DARK}>MA5:36.47<Arrow /></Stat>
        <Stat $left={17} $width={162} $color="#f5b93f">10:36.83<Arrow up /></Stat>
        <Stat $left={15} $width={163} $color="#cc1a80">20:37.50<Arrow /></Stat>
        <DkChip $left={76} $width={127} $spread>
          DK点
          <Corner />
        </DkChip>
        <Chip $left={39} $width={133}>前复权</Chip>
      </Legend>

      <ChartBox $height={630}>
        <Tools>
          <Tool>
            <Stroke w={32} h={34} sw={3} cap="butt" join="miter" d="M18 2L3 17l15 15M29 2L14 17l15 15" />
          </Tool>
          <Tool>
            <Stroke w={34} h={34} sw={3} cap="butt" d="M0 17H34" />
          </Tool>
          <Tool>
            <Stroke w={34} h={34} sw={3} cap="butt" d="M0 17H34M17 0V34" />
          </Tool>
          <Tool>
            <Stroke w={20} h={34} sw={3} cap="butt" join="miter" d="M17 2L2 17l15 15" />
          </Tool>
          <Tool $muted>
            <Stroke w={20} h={34} sw={3} cap="butt" join="miter" d="M3 2l15 15L3 32" />
          </Tool>
          <Tool>
            <Stroke w={34} h={34} sw={3} cap="butt" join="miter" d="M2 16V2H16M2 2L15 15M32 18V32H18M32 32L19 19" />
          </Tool>
        </Tools>
        <PriceChart />
      </ChartBox>

      <Legend $height={63}>
        <Chip $width={152} $spread>
          成交量
          <Caret $w={15} $h={12} $color={GREY} />
        </Chip>
        <Stat $left={5} $width={116} $color={DARK}><Narrow>17498</Narrow><Arrow /></Stat>
        <Stat $left={20} $width={198} $color="#f0bd18"><Narrow>MA1:24974</Narrow><Arrow /></Stat>
        <Stat $left={19} $width={198} $color="#d426d4"><Narrow>MA2:32950</Narrow><Arrow /></Stat>
        <Stat $left={19} $width={198} $color={GREEN}><Narrow>MA3:33822</Narrow><Arrow /></Stat>
        <SideHandle>
          <Stroke w={18} h={30} sw={4} color="#fff" d="M15 3L3 15l12 12" />
        </SideHandle>
      </Legend>

      <ChartBox $height={310}>
        <VolumeChart />
      </ChartBox>

      <BannerWrap>
        <Banner>
          <Horn />
          <span>融资到期短信提醒，避免逾期，安心用钱&gt;&gt;</span>
          <i />
          <Stroke w={34} h={34} sw={3} d="M2 2L32 32M32 2L2 32" />
        </Banner>
      </BannerWrap>

      <TabBar $left={27.5}>
        {SECTIONS.map((name) => (
          <Tab key={name} $width={146.5} $drop={5} $active={name === "股吧"}>{name}</Tab>
        ))}
      </TabBar>

      <Cards>
        <Card>
          <CardArt>
            <svg width="499" height="130" viewBox="0 0 499 130">
              <path d="M243 32h48V0h208v130H243z" fill="#fef1ef" />
              <path d="M342 24H464l8 106H338z" fill="#fff7f4" />
              <path d="M365 53h76v77h-76z" fill="#fbe6e4" />
            </svg>
          </CardArt>
          <CardIcon id="rank">
            <path d="M10 25h7v13h-7zM18 13h12v25H18zM31 28h7v10h-7z" fill="#fff" />
            <text x="21" y="29" fontSize="11" fontWeight="700" fill="#dc5f5c">1</text>
          </CardIcon>
          <span>人气榜</span>
          <Stroke w={18} h={46} sw={2.5} color="#aaa" d="M4 13l10 11L4 35" />
        </Card>
        <Card>
          <CardArt>
            <svg width="499" height="130" viewBox="0 0 499 130">
              <path d="M256 0h243v130H266z" fill="#fef1ef" />
              <text x="320" y="158" fontSize="160" fontWeight="700" fill="#fbe5e3" stroke="#fff7f5" strokeWidth="34" paintOrder="stroke" textLength="168" lengthAdjust="spacingAndGlyphs">VS</text>
            </svg>
          </CardArt>
          <CardIcon id="versus">
            <text x="8" y="35" fontSize="29" fontWeight="900" fontStyle="italic" fill="#fff" textLength="31" lengthAdjust="spacingAndGlyphs">VS</text>
          </CardIcon>
          <span>多空看盘</span>
        </Card>
      </Cards>

      <BottomBar>
        <IndexBox>
          <CaretUp />
          <strong>3171.57</strong>
          <div>
            <em>创业</em>
            3.57%
          </div>
        </IndexBox>
        {ACTIONS.map(([name, Icon]) => (
          <Action key={name}>
            <Icon />
            {name}
          </Action>
        ))}
      </BottomBar>

      <NavBar>
        <Stroke w={38} h={38} sw={3} cap="butt" color="#999" d="M1 3H37M1 19H37M1 35H37" />
        <Stroke w={38} h={38} sw={3} color="#999">
          <rect x="2" y="2" width="34" height="34" rx="7" />
        </Stroke>
        <Stroke w={38} h={38} sw={2.5} color="#999" d="M35 4V34Q35 36 33 35L4 21Q2 19 4 17L33 3Q35 2 35 4Z" />
      </NavBar>
    </Screen>
  );
}

export default App;
